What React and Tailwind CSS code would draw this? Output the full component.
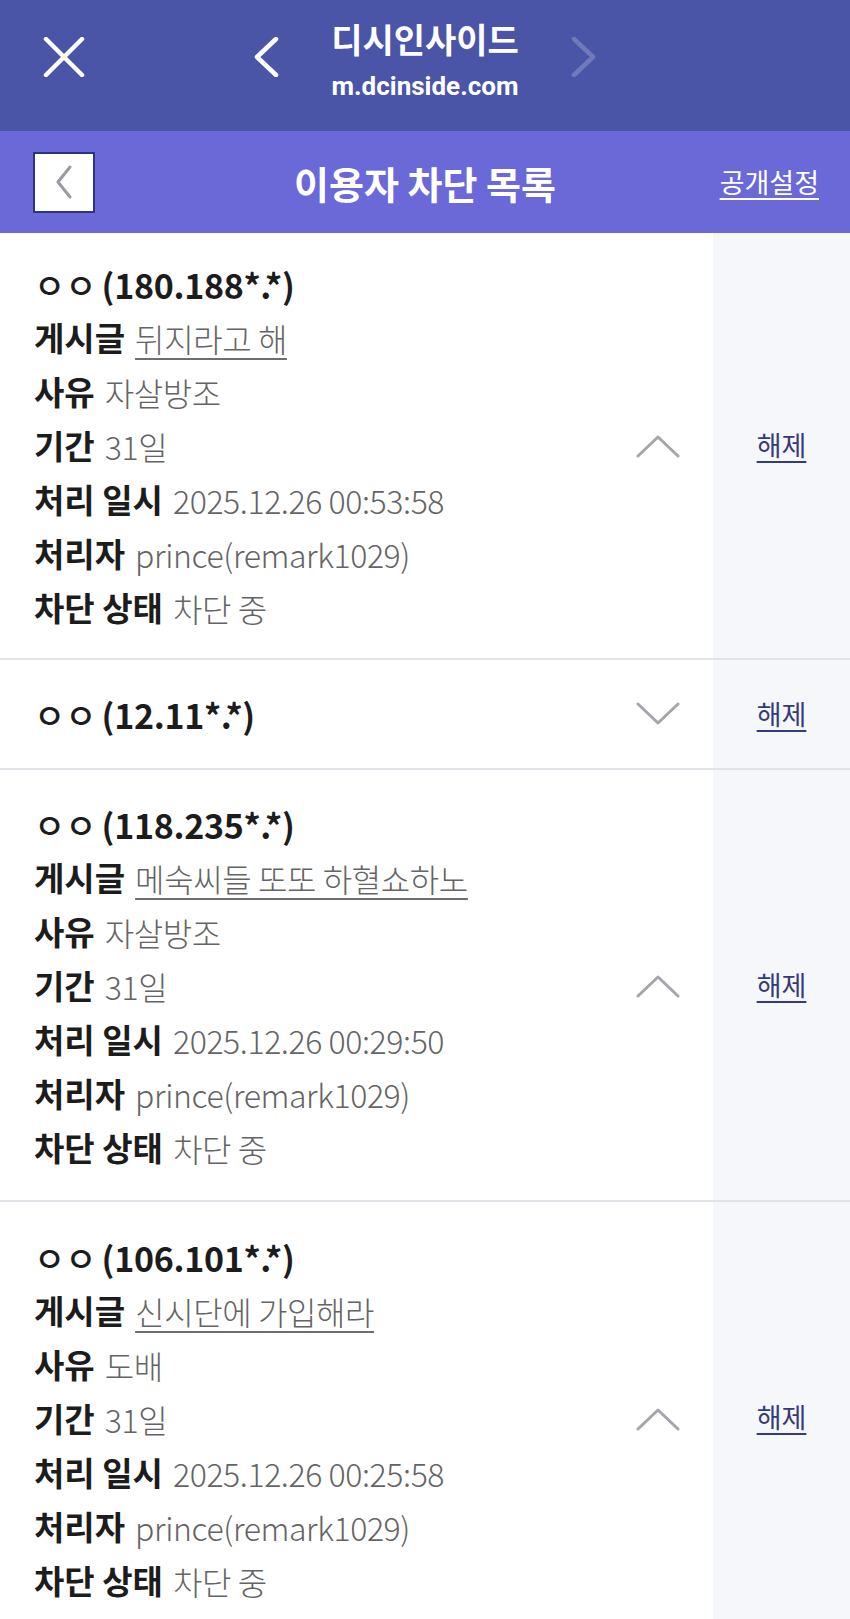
import React from "react";

const FONT = { fontFamily: '"Noto Sans CJK KR", "Noto Sans", sans-serif' };

function ChevronUp() {
  return (
    <svg width="44" height="26" viewBox="0 0 44 26" fill="none">
      <path d="M2 23 L22 4 L42 23" stroke="#a4a5ad" strokeWidth="3" strokeLinecap="round" strokeLinejoin="round" />
    </svg>
  );
}
function ChevronDown() {
  return (
    <svg width="44" height="26" viewBox="0 0 44 26" fill="none">
      <path d="M2 3 L22 22 L42 3" stroke="#a4a5ad" strokeWidth="3" strokeLinecap="round" strokeLinejoin="round" />
    </svg>
  );
}

function Row({ label, children, link }) {
  return (
    <div className="h-[54px] flex items-center whitespace-nowrap">
      <span className="font-bold text-[33px] text-[#1c1c1c]">{label}</span>
      <span
        className={
          "ml-[10px] font-light text-[32px] tracking-[-0.4px] text-[#646464] " +
          (link ? "underline decoration-[#6e6e6e] decoration-2 underline-offset-[6px]" : "")
        }
      >
        {children}
      </span>
    </div>
  );
}

function Title({ ip }) {
  return (
    <div className="h-[54px] flex items-center whitespace-nowrap text-[#1c1c1c] text-[34px]">
      <span className="font-medium">ㅇㅇ</span>
      <span className="ml-[5px] font-bold tracking-[-0.3px]">({ip})</span>
    </div>
  );
}

function Unblock() {
  return (
    <div className="w-[137px] bg-[#f6f7fa] flex items-center justify-center">
      <span className="text-[27px] text-[#353b78] underline underline-offset-[5px]">해제</span>
    </div>
  );
}

function Item({ data, pt, pb }) {
  return (
    <div className="flex border-b-2 border-[#e2e3e8]">
      <div className={"flex-1 flex items-center pl-[34px] " + pt + " " + pb}>
        <div className="flex-1">
          <Title ip={data.ip} />
          <Row label="게시글" link>{data.post}</Row>
          <Row label="사유">{data.reason}</Row>
          <Row label="기간">31일</Row>
          <Row label="처리 일시">{data.date}</Row>
          <Row label="처리자">prince(remark1029)</Row>
          <Row label="차단 상태">차단 중</Row>
        </div>
        <div className="w-[110px] flex justify-center">
          <ChevronUp />
        </div>
      </div>
      <Unblock />
    </div>
  );
}

export default function App() {
  const items = [
    { ip: "180.188*.*", post: "뒤지라고 해", reason: "자살방조", date: "2025.12.26 00:53:58" },
    { ip: "118.235*.*", post: "메숙씨들 또또 하혈쇼하노", reason: "자살방조", date: "2025.12.26 00:29:50" },
    { ip: "106.101*.*", post: "신시단에 가입해라", reason: "도배", date: "2025.12.26 00:25:58" },
  ];
  return (
    <div className="w-[850px] h-[1619px] overflow-hidden bg-white" style={FONT}>
      {/* Browser top bar */}
      <div className="h-[131px] bg-[#4a55a7] grid grid-cols-[1fr_auto_1fr]">
        <div className="h-[114px] flex items-center pl-[43px]">
          <svg width="42" height="40" viewBox="0 0 42 40" fill="none">
            <path d="M3 2 L39 38 M39 2 L3 38" stroke="white" strokeWidth="4.5" strokeLinecap="round" />
          </svg>
        </div>
        <div className="h-[114px] flex items-center gap-[52px]">
          <svg width="26" height="40" viewBox="0 0 26 40" fill="none">
            <path d="M23 2 L4 20 L23 38" stroke="white" strokeWidth="4.5" strokeLinecap="round" strokeLinejoin="round" />
          </svg>
          <div className="mt-[10px] flex flex-col items-center text-white whitespace-nowrap">
            <div className="text-[34px] font-bold leading-[48px]">디시인사이드</div>
            <div className="text-[26px] font-bold leading-[46px]" style={{ fontFamily: 'Roboto, "Noto Sans", sans-serif' }}>m.dcinside.com</div>
          </div>
          <svg width="26" height="40" viewBox="0 0 26 40" fill="none">
            <path d="M3 2 L22 20 L3 38" stroke="#7079ba" strokeWidth="4.5" strokeLinecap="round" strokeLinejoin="round" />
          </svg>
        </div>
        <div />
      </div>

      {/* Page header */}
      <div className="h-[102px] bg-[#6b68d8] grid grid-cols-[1fr_auto_1fr] items-center px-[33px]">
        <div className="flex">
          <div className="w-[62px] h-[61px] bg-white border-2 border-[#2e3380] flex items-center justify-center">
            <svg width="20" height="36" viewBox="0 0 20 36" fill="none">
              <path d="M16 3 L4 18 L16 33" stroke="#9a9aa2" strokeWidth="3" strokeLinecap="round" strokeLinejoin="round" />
            </svg>
          </div>
        </div>
        <div className="text-center text-white text-[38px] font-bold whitespace-nowrap">이용자 차단 목록</div>
        <div className="flex justify-end">
          <span className="text-white text-[27px] underline underline-offset-[5px] mr-[-2px]">공개설정</span>
        </div>
      </div>

      <div>
        <Item data={items[0]} pt="pt-[24px]" pb="pb-[23px]" />
        <div className="flex border-b-2 border-[#e2e3e8] h-[110px]">
          <div className="flex-1 flex items-center pl-[34px]">
            <div className="flex-1">
              <Title ip="12.11*.*" />
            </div>
            <div className="w-[110px] flex justify-center">
              <ChevronDown />
            </div>
          </div>
          <Unblock />
        </div>
        <Item data={items[1]} pt="pt-[27px]" pb="pb-[25px]" />
        <Item data={items[2]} pt="pt-[28px]" pb="pb-[25px]" />
      </div>
    </div>
  );
}
